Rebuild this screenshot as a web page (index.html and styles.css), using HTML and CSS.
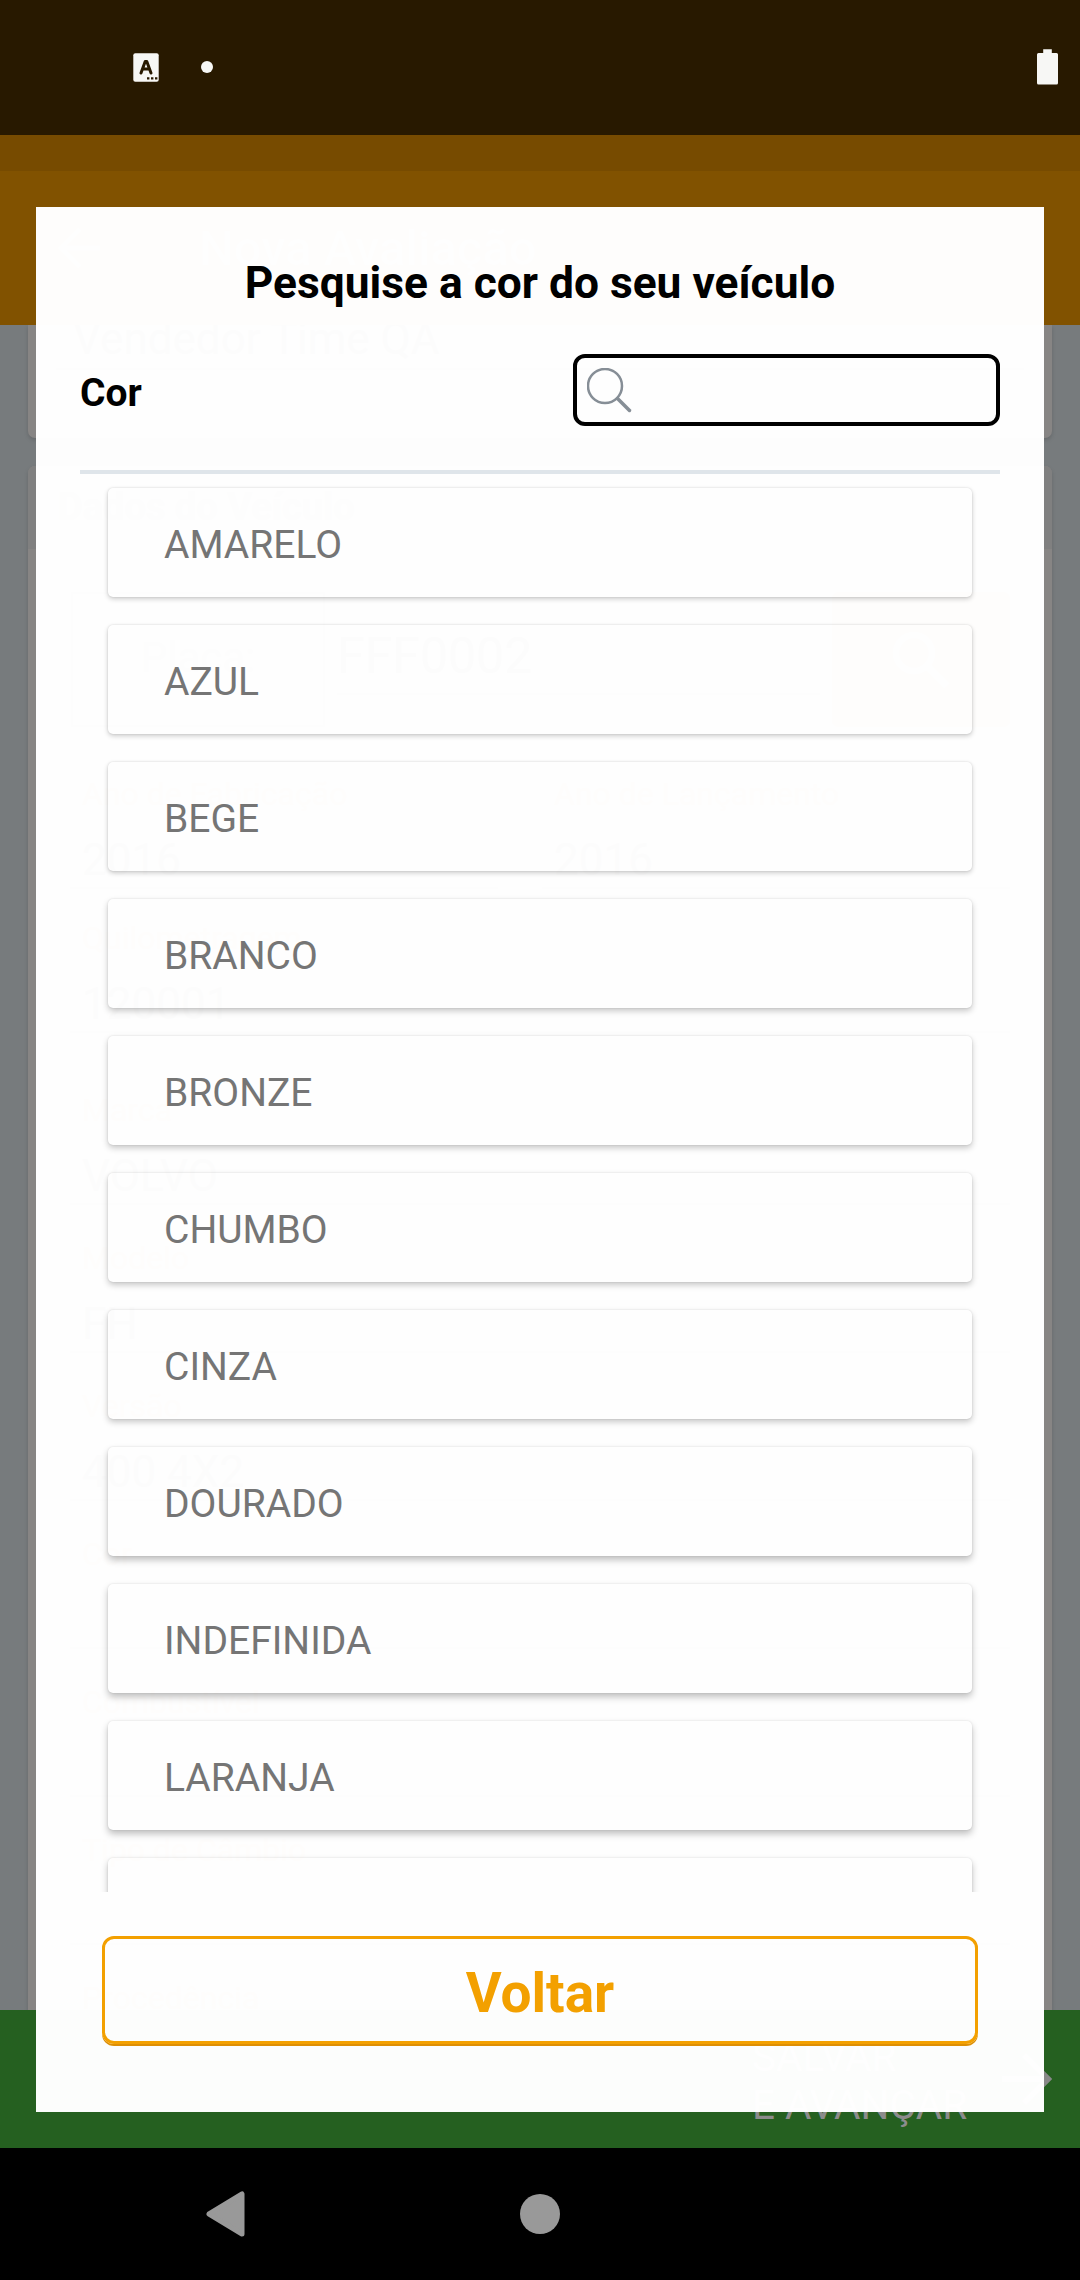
FILE: index.html
```html
<!DOCTYPE html>
<html lang="pt-BR">
<head>
<meta charset="utf-8">
<title>Pesquise a cor do seu veículo</title>
<link rel="stylesheet" href="styles.css">
</head>
<body>
<div class="screen">
  <header class="status">
    <svg class="status-keyboard" viewBox="0 0 26 29"><rect x=".3" y=".3" width="25.4" height="28.4" rx="2" fill="#f7f7f5"/><path d="M8 20 12.2 8.5h1.6L18 20M9.6 16h6.8" fill="none" stroke="#281900" stroke-width="3" stroke-linecap="round" stroke-linejoin="round"/><path d="M14 24.2h2.4v2.4H14zM18 24.2h2.4v2.4H18zM22 24.2h2.4v2.4H22z" fill="#281900"/></svg>
    <span class="status-dot"></span>
    <svg class="status-battery" viewBox="0 0 21 36"><path d="M6.2.3h8.6V4H19.500q1.500 0 1.500 1.500V34q0 1.500-1.500 1.500h-18Q0 35.500 0 34V5.500Q0 4 1.500 4H6.200z" fill="#f7f7f5"/></svg>
  </header>
  <div class="status-strip"></div>
  <div class="toolbar">
    <svg class="toolbar-back" viewBox="0 0 44 44"><path d="M43 22H4M23 3 4 22l19 19" fill="none" stroke="#888" stroke-width="5"/></svg>
    <span>Nova Avaliação</span>
  </div>
  <main class="page">
    <section class="card seller"><p class="seller-name">Vendedor Time QA</p></section>
    <section class="card vehicle">
      <h2 class="vehicle-head">Dados do Veículo</h2>
      <div class="plate">
        <div class="plate-label">Placa:</div>
        <div class="plate-value">FFF0002</div>
        <div class="plate-search"><svg viewBox="0 0 60 60"><circle cx="23" cy="23" r="18" fill="none" stroke="#888" stroke-width="7"/><path d="m36 36 20 20" stroke="#888" stroke-width="8"/></svg></div>
      </div>
      <div class="years">
        <div class="field"><label>Ano de Fabricação</label><p>2016</p></div>
        <div class="field"><label>Ano de Lançamento</label><p>2016</p></div>
      </div>
      <div class="field mileage"><label>Quilometragem</label><p>120001</p></div>
      <div class="field"><label>Marca</label><p>VOLVO</p></div>
      <div class="field"><label>Modelo</label><p>FH</p></div>
      <div class="field"><label>Versão</label><p>400 4X2</p></div>
      <div class="field"><label>Cor</label><p></p></div>
      <div class="field"><label>Combustível</label><p></p></div>
      <div class="field"><label>Tipo de Câmbio</label><p></p></div>
      <div class="field"><label>Procedência</label><p></p></div>
    </section>
  </main>
  <div class="save">
    <span>SALVAR<br>E AVANÇAR</span>
    <svg class="save-arrow" viewBox="0 0 52 52"><path d="M2 26h46M24 2l24 24-24 24" fill="none" stroke="#888" stroke-width="6"/></svg>
  </div>
  <nav class="nav">
    <svg class="nav-back" viewBox="0 0 39 46"><path d="M3 23 36 3v40z" fill="#999" stroke="#999" stroke-width="5" stroke-linejoin="round"/></svg>
    <span class="nav-home"></span>
    <span></span>
  </nav>

  <div class="dialog">
    <h1 class="dialog-title">Pesquise a cor do seu veículo</h1>
    <div class="search-row">
      <span class="search-label">Cor</span>
      <div class="search-box"><svg viewBox="0 0 46 46"><circle cx="18" cy="18" r="17" fill="none" stroke="#868e96" stroke-width="2.500"/><path d="m30.500 30.500 12 12" stroke="#868e96" stroke-width="3.500" stroke-linecap="round"/></svg></div>
    </div>
    <ul class="colors">
      <li>AMARELO</li>
      <li>AZUL</li>
      <li>BEGE</li>
      <li>BRANCO</li>
      <li>BRONZE</li>
      <li>CHUMBO</li>
      <li>CINZA</li>
      <li>DOURADO</li>
      <li>INDEFINIDA</li>
      <li>LARANJA</li>
      <li></li>
    </ul>
    <button class="back">Voltar</button>
  </div>
</div>
</body>
</html>
```
FILE: styles.css
```css
* { box-sizing: border-box; margin: 0; padding: 0; }
body { font-family: Roboto, "Noto Sans", sans-serif; }
svg { display: block; }

.screen {
  position: relative;
  display: flex;
  flex-direction: column;
  width: 1080px;
  height: 2280px;
  overflow: hidden;
  background: #777b7d;
}

/* Status bar */
.status {
  display: flex;
  align-items: center;
  flex: none;
  height: 135px;
  padding: 0 22px 1px 133px;
  background: #281900;
}
.status-keyboard { width: 26px; height: 29px; }
.status-dot { width: 12px; height: 12px; margin-left: 42px; border-radius: 50%; background: #f7f7f5; }
.status-battery { width: 21px; height: 36px; margin-left: auto; }
.status-strip { flex: none; height: 36px; background: #774b00; }

/* Dimmed page under the dialog */
.toolbar {
  display: flex;
  align-items: center;
  flex: none;
  gap: 98px;
  height: 154px;
  padding-left: 57px;
  background: #815200;
  color: #888;
  font-size: 49px;
  font-weight: 500;
}
.toolbar-back { width: 44px; height: 44px; }
.page {
  display: flex;
  flex-direction: column;
  flex: none;
  gap: 28px;
  height: 1685px;
  padding: 0 28px;
  overflow: hidden;
}
.card { flex: none; background: #878584; box-shadow: 0 2px 4px rgba(0, 0, 0, .15); }
.seller { height: 113px; padding: 0 28px; border-radius: 0 0 7px 7px; }
.seller-name {
  height: 45px;
  padding-left: 17px;
  border-bottom: 2px solid #666;
  color: #111;
  font-size: 44px;
  line-height: 28px;
}
.vehicle { height: 1700px; border-radius: 7px 7px 0 0; }
.vehicle-head {
  height: 83px;
  padding-left: 30px;
  border-radius: 7px 7px 0 0;
  background: #808080;
  color: #555;
  font-size: 38px;
  line-height: 83px;
}
.plate {
  display: grid;
  grid-template-columns: 254px 1fr 178px;
  height: 135px;
  margin: 43px 42px 47px 43px;
}
.plate-label { border: 2px solid #666; color: #555; font-size: 42px; line-height: 128px; text-align: center; }
.plate-value {
  height: 103px;
  margin: 0 12px 0 12px;
  border-bottom: 2px solid #666;
  color: #000;
  font-size: 50px;
  line-height: 128px;
}
.plate-search { display: grid; place-items: center; border-radius: 7px; background: #815200; }
.plate-search svg { width: 60px; height: 60px; }
.years { display: grid; grid-template-columns: 1fr 1fr; }
.field {
  height: 115px;
  margin: 0 42px 33px;
  padding-left: 12px;
  border-bottom: 2px solid #777;
  color: #111;
}
.years .field { margin-bottom: 29px; }
.years .field + .field { margin-left: 2px; }
.mileage { margin-bottom: 57px; }
.field label { display: block; height: 61px; color: #815200; font-size: 32px; line-height: 40px; }
.field p { font-size: 44px; line-height: 50px; }
.save {
  display: flex;
  align-items: center;
  justify-content: flex-end;
  flex: none;
  gap: 28px;
  height: 138px;
  padding-right: 28px;
  background: #256020;
  color: #8c8c8c;
  font-size: 40.500px;
  line-height: 48px;
}
.save span { width: 220px; padding-top: 4px; white-space: nowrap; }
.save-arrow { width: 52px; height: 52px; }

/* System navigation */
.nav {
  display: grid;
  grid-template-columns: 451px 178px 451px;
  align-items: center;
  justify-items: center;
  flex: none;
  height: 132px;
  background: #000;
}
.nav-back { width: 39px; height: 46px; }
.nav-home { width: 40px; height: 40px; border-radius: 50%; background: #999; }

/* Color dialog */
.dialog {
  position: absolute;
  left: 36px;
  top: 207px;
  display: flex;
  flex-direction: column;
  width: 1008px;
  height: 1905px;
  padding: 0 44px;
  background: rgba(255, 255, 255, .988);
}
.dialog-title {
  height: 147px;
  padding-top: 50px;
  color: #000;
  font-size: 44.300px;
  font-weight: 700;
  line-height: 52px;
  text-align: center;
}
.search-row {
  display: flex;
  justify-content: space-between;
  flex: none;
  height: 120px;
  border-bottom: 4px solid #dfe5ea;
}
.search-label { color: #000; font-size: 39px; font-weight: 700; line-height: 78px; }
.search-box { width: 427px; height: 72px; padding: 10px; border: 4px solid #000; border-radius: 12px; }
.search-box svg { width: 46px; height: 46px; }
.colors {
  display: flex;
  flex-direction: column;
  flex: none;
  gap: 28px;
  height: 1418px;
  padding: 14px 28px 0;
  overflow: hidden;
  list-style: none;
}
.colors li {
  flex: none;
  height: 109px;
  padding-left: 56px;
  border-radius: 5px;
  color: #757575;
  font-size: 39px;
  line-height: 115px;
  box-shadow: 0 2px 5px rgba(0, 0, 0, .2), 0 0 2px rgba(0, 0, 0, .12);
}
.colors li:nth-child(n + 4) { box-shadow: 0 3px 6px rgba(0, 0, 0, .22), 0 0 2px rgba(0, 0, 0, .12); }
.colors li:nth-child(n + 8) { box-shadow: 0 4px 7px rgba(0, 0, 0, .25), 0 0 2px rgba(0, 0, 0, .12); }
.back {
  flex: none;
  height: 108px;
  margin: 44px 22px 0;
  padding-top: 6px;
  border: 3px solid #f3a000;
  border-radius: 12px;
  background: transparent;
  box-shadow: 0 2px 0 #dd8f05;
  color: #f3a000;
  font: 700 55px/96px Roboto, "Noto Sans", sans-serif;
}
```
